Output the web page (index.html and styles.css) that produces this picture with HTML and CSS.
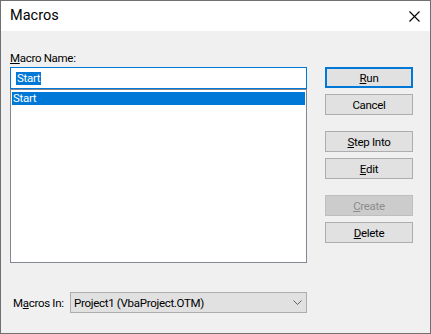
FILE: index.html
```html
<!DOCTYPE html>
<html>
<head>
<meta charset="utf-8">
<link rel="stylesheet" href="styles.css">
</head>
<body>
<div class="window">
  <div class="titlebar">
    <span class="title">Macros</span>
    <svg class="close" width="11" height="11" viewBox="0 0 11 11"><path d="M0.5 0.5 L10.5 10.5 M10.5 0.5 L0.5 10.5" stroke="#000" stroke-width="1.1" fill="none"/></svg>
  </div>
  <div class="content">
    <div class="main">
      <div class="left">
        <div class="label"><u>M</u>acro Name:</div>
        <div class="input"><span class="sel">Start</span></div>
        <div class="list"><div class="item selected">Start</div></div>
      </div>
      <div class="buttons">
        <div class="btn default"><u>R</u>un</div>
        <div class="btn">Cancel</div>
        <div class="btn gap"><u>S</u>tep Into</div>
        <div class="btn"><u>E</u>dit</div>
        <div class="btn gap disabled"><u>C</u>reate</div>
        <div class="btn"><u>D</u>elete</div>
      </div>
    </div>
    <div class="bottom">
      <div class="label2">M<u>a</u>cros In:</div>
      <div class="select">
        <span>Project1 (VbaProject.OTM)</span>
        <svg class="chev" width="9" height="5" viewBox="0 0 9 5"><path d="M0.5 0.5 L4.5 4.5 L8.5 0.5" stroke="#606060" stroke-width="1" fill="none"/></svg>
      </div>
    </div>
  </div>
</div>
</body>
</html>
```
FILE: styles.css
```css
html, body {
  margin: 0;
  padding: 0;
}
body {
  font-family: Roboto, "Liberation Sans", sans-serif;
  font-size: 11.5px;
  letter-spacing: -0.3px;
  color: #000;
  background: #f0f0f0;
}
.window {
  width: 431px;
  height: 334px;
  box-sizing: border-box;
  border: 1px solid #707070;
  display: flex;
  flex-direction: column;
  background: #f0f0f0;
}
.titlebar {
  height: 30px;
  background: #fff;
  display: flex;
  align-items: center;
  justify-content: space-between;
  padding: 0 10px 0 9px;
  flex: none;
}
.title {
  font-size: 14.5px;
  letter-spacing: 0;
  line-height: 20px;
  margin-top: -1px;
}
.close {
  display: block;
}
.content {
  flex: 1;
  display: flex;
  flex-direction: column;
  padding: 20px 0 0 9px;
}
.main {
  display: flex;
  gap: 18px;
}
.left {
  width: 297px;
  display: flex;
  flex-direction: column;
}
.label {
  line-height: 15px;
  height: 15px;
}
.input {
  margin-top: 1px;
  height: 22px;
  box-sizing: border-box;
  border: 1px solid #0078d7;
  background: #fff;
  display: flex;
  align-items: center;
  padding-left: 5px;
}
.sel {
  background: #0078d7;
  color: #fff;
  line-height: 13px;
  padding: 0 1px;
}
.list {
  height: 174px;
  box-sizing: border-box;
  border: 1px solid #828790;
  background: #fff;
  padding: 2px 1px;
}
.item {
  line-height: 13px;
  padding-left: 1px;
}
.selected {
  background: #0078d7;
  color: #fff;
}
.buttons {
  padding-top: 16px;
  display: flex;
  flex-direction: column;
  gap: 6px;
}
.btn {
  width: 88px;
  height: 21px;
  box-sizing: border-box;
  border: 1px solid #adadad;
  background: #e1e1e1;
  display: flex;
  align-items: center;
  justify-content: center;
}
.btn.default {
  border: 2px solid #0078d7;
}
.btn.gap {
  margin-top: 10px;
}
.btn.disabled {
  background: #cccccc;
  border-color: #bfbfbf;
  color: #8d8d8d;
}
.bottom {
  display: flex;
  align-items: center;
  margin-top: 29px;
}
.label2 {
  width: 60px;
  flex: none;
  white-space: nowrap;
  padding-left: 3px;
  box-sizing: border-box;
}
.select {
  width: 237px;
  height: 21px;
  box-sizing: border-box;
  border: 1px solid #adadad;
  background: #e1e1e1;
  display: flex;
  align-items: center;
  justify-content: space-between;
  padding: 0 4px 0 3px;
}
.chev {
  display: block;
}
```
